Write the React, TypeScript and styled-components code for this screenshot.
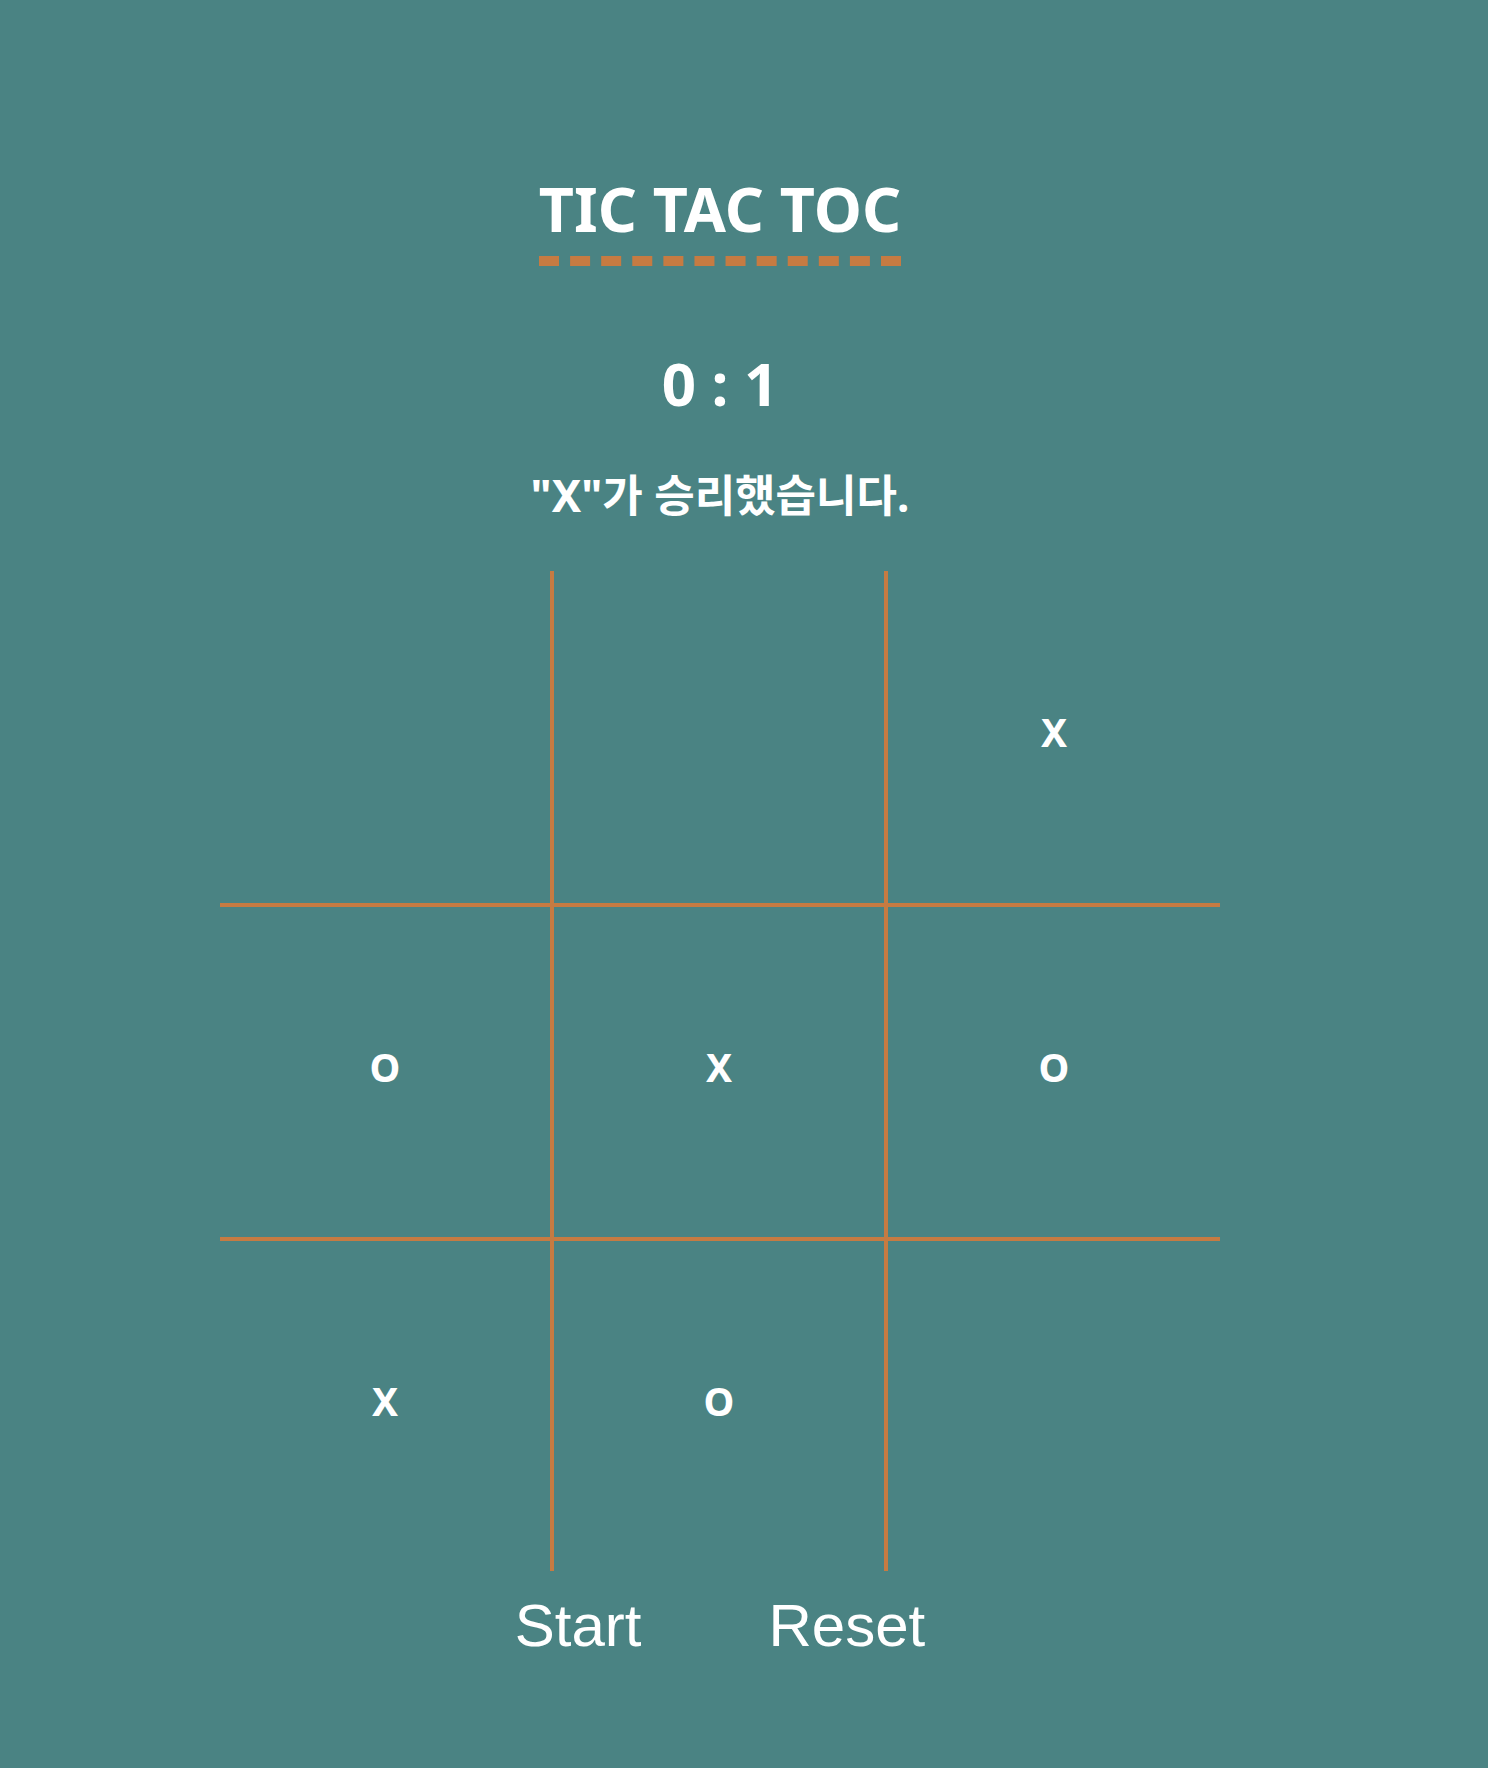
import styled, { createGlobalStyle } from "styled-components"

const GlobalStyle = createGlobalStyle`
  html, body {
    margin: 0;
    padding: 0;
    background: #4a8383;
  }

  body {
    font-family: "Noto Sans", "Noto Sans CJK KR", sans-serif;
    color: #ffffff;
  }
`

const Page = styled.div`
  width: 1440px;
  min-height: 1768px;
  display: flex;
  flex-direction: column;
  align-items: center;
  padding-top: 178px;
  box-sizing: border-box;
`

const Title = styled.h1`
  margin: 0;
  font-size: 61px;
  font-weight: 700;
  line-height: 1;
`

const TitleText = styled.span`
  display: inline-block;
  padding-bottom: 17px;
  border-bottom: 10px dashed #c67b42;
`

const Score = styled.div`
  margin-top: 87px;
  font-size: 60px;
  font-weight: 700;
  line-height: 1;
`

const Message = styled.p`
  margin: 60px 0 0;
  font-size: 44px;
  font-weight: 700;
  line-height: 1;
`

const Board = styled.div`
  margin-top: 54px;
  display: grid;
  grid-template-columns: 334px 334px 332px;
  grid-template-rows: 336px 334px 330px;
`

const Cell = styled.div<{ $right: boolean; $bottom: boolean }>`
  box-sizing: border-box;
  display: flex;
  align-items: center;
  justify-content: center;
  padding-bottom: 12px;
  border-right: ${(p) => (p.$right ? "4px solid #c67b42" : "none")};
  border-bottom: ${(p) => (p.$bottom ? "4px solid #c67b42" : "none")};
  font-size: 39px;
  font-weight: 700;
  cursor: pointer;
`

const Controls = styled.div`
  margin-top: 19px;
  display: flex;
  gap: 115px;
`

const Button = styled.button`
  background: none;
  border: none;
  padding: 1px 6px;
  color: #ffffff;
  font-family: "Liberation Sans", Arial, sans-serif;
  font-size: 60px;
  cursor: pointer;
`

const cells = ["", "", "X", "O", "X", "O", "X", "O", ""]

export default function App() {
  return (
    <>
      <GlobalStyle />
      <Page>
        <Title>
          <TitleText>TIC TAC TOC</TitleText>
        </Title>
        <Score>0 : 1</Score>
        <Message>"X"가 승리했습니다.</Message>
        <Board>
          {cells.map((mark, i) => (
            <Cell key={i} $right={i % 3 < 2} $bottom={i < 6}>
              {mark}
            </Cell>
          ))}
        </Board>
        <Controls>
          <Button>Start</Button>
          <Button>Reset</Button>
        </Controls>
      </Page>
    </>
  )
}
